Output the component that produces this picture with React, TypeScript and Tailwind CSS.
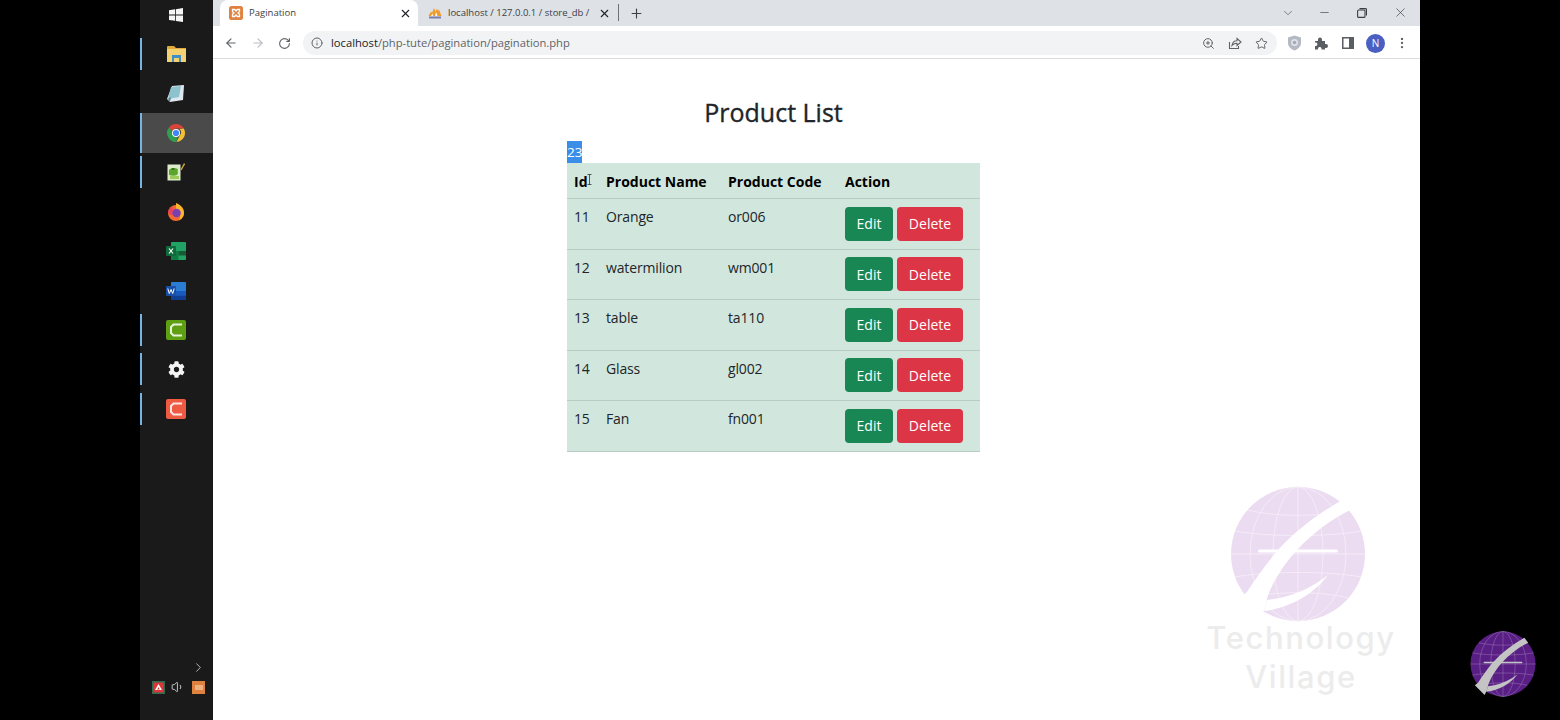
import { ArrowLeft, ArrowRight, ChevronDown, ChevronRight, EllipsisVertical, Info, Minus, Plus, RotateCw, Star, Volume1, X, ZoomIn } from 'lucide-react'
import { FaCog } from 'react-icons/fa'

const products = [
  { id: 11, name: 'Orange', code: 'or006' },
  { id: 12, name: 'watermilion', code: 'wm001' },
  { id: 13, name: 'table', code: 'ta110' },
  { id: 14, name: 'Glass', code: 'gl002' },
  { id: 15, name: 'Fan', code: 'fn001' },
]

function XamppIcon({ size = 14 }: { size?: number }) {
  return (
    <svg width={size} height={size} viewBox="0 0 14 14">
      <rect width="14" height="14" rx="2.5" fill="#e0823f" />
      <path d="M3.5 3.5h2.2L7 5l1.3-1.5h2.2v2.2L9 7l1.5 1.3v2.2H8.3L7 9l-1.3 1.5H3.5V8.3L5 7 3.5 5.7z" fill="none" stroke="#fff" strokeWidth="1.3" />
    </svg>
  )
}

function PmaIcon() {
  return (
    <svg width="14" height="14" viewBox="0 0 14 14">
      <path d="M0.5 10 3 5.5 4 7 6 2 7.5 5.5 9 2.5 10 5 11 3.5 13.5 10z" fill="#ee9b2d" />
      <path d="M3 10 4.5 7.5 5 10zM7 10 8 6 9.5 10z" fill="#fff" />
      <rect x="1" y="10.5" width="12" height="2" fill="#7b7fb0" />
    </svg>
  )
}

function ShareIcon() {
  return (
    <svg width="14" height="14" viewBox="0 0 14 14" fill="none" stroke="#5f6368" strokeWidth="1.1">
      <path d="M1.5 6v6.5h9V10" />
      <path d="M4 9.5C4.5 6.5 6.5 4.8 9 4.8V2.5l4 3.5-4 3.5V7.2C7 7.2 5.3 8 4 9.5z" />
    </svg>
  )
}

function ShieldIcon() {
  return (
    <svg width="15" height="16" viewBox="0 0 15 16">
      <path d="M7.5 0.5 14 2.5V8c0 3.5-3 6-6.5 7.5C4 14 1 11.5 1 8V2.5z" fill="#b5b9c4" />
      <circle cx="7.5" cy="7.5" r="3.5" fill="#dfe2e8" />
      <circle cx="7.5" cy="7.5" r="1.8" fill="#a5a9b4" />
    </svg>
  )
}

function PuzzleIcon() {
  return (
    <svg width="14" height="14" viewBox="0 0 14 14">
      <path d="M1 5h3V3.5a2 2 0 0 1 4 0V5h3v3h1a2 2 0 0 1 0 4h-1v1.5H7.5v-1a1.8 1.8 0 0 0-3.5 0v1H1V10h1a1.8 1.8 0 0 0 0-3.5H1z" fill="#5a5d62" />
    </svg>
  )
}

function SidePanelIcon() {
  return (
    <svg width="12" height="12" viewBox="0 0 12 12">
      <rect x="0.75" y="0.75" width="10.5" height="10.5" fill="none" stroke="#5a5d62" strokeWidth="1.5" />
      <rect x="7" y="1" width="4" height="10" fill="#5a5d62" />
    </svg>
  )
}

function RestoreIcon() {
  return (
    <svg width="10" height="10" viewBox="0 0 10 10" fill="none" stroke="#3c4043" strokeWidth="1.1">
      <rect x="0.6" y="2" width="7.4" height="7.4" rx="1" />
      <path d="M2.5 0.6h6a1 1 0 0 1 1 1v6" />
    </svg>
  )
}

function WindowsIcon() {
  return (
    <svg width="14" height="14" viewBox="0 0 14 14" fill="#f4f4f4">
      <path d="M0 2.2 6 1.3v5.3H0zM6.8 1.2 14 0v6.6H6.8zM0 7.4h6v5.4L0 11.9zM6.8 7.4H14V14L6.8 12.9z" />
    </svg>
  )
}

function FolderIcon() {
  return (
    <svg width="19" height="16" viewBox="0 0 19 16">
      <path d="M0 1a1 1 0 0 1 1-1h6l2 2h10v3H0z" fill="#e0a93a" />
      <rect y="3" width="19" height="13" rx="0.5" fill="#f4d272" />
      <path d="M5 9h9v7h-2v-4H7v4H5z" fill="#3f8fc4" />
    </svg>
  )
}

function NotepadIcon() {
  return (
    <svg width="18" height="17" viewBox="0 0 18 17">
      <path d="M5 1 17 0 16 15 3 17 0 14z" fill="#dfe8ec" />
      <path d="M4 2 14 1 12 12 1 14z" fill="#8cc3cf" />
      <path d="M1 14 3 17 4 12z" fill="#4f7f8e" />
    </svg>
  )
}

function ChromeIcon() {
  return (
    <svg width="18" height="18" viewBox="0 0 18 18">
      <path d="M9 0a9 9 0 0 1 7.8 4.5H9a4.5 4.5 0 0 0-4.2 2.9L2.2 3.2A9 9 0 0 1 9 0z" fill="#dc4437" />
      <path d="M16.8 4.5A9 9 0 0 1 9.5 18l3.4-6.8A4.5 4.5 0 0 0 12.5 5z" fill="#f5c02f" />
      <path d="M2.2 3.2 5.8 10A4 4 0 0 0 11 13l-2 5A9 9 0 0 1 2.2 3.2z" fill="#2f9e4f" />
      <circle cx="9" cy="9" r="4" fill="#fff" />
      <circle cx="9" cy="9" r="3.1" fill="#4285f4" />
    </svg>
  )
}

function NotepadPlusIcon() {
  return (
    <svg width="18" height="18" viewBox="0 0 18 18">
      <rect x="0.5" y="1.5" width="13" height="16" fill="#dcebc8" />
      <path d="M2 7c3-3 6-2 9-1-1 2 1 4-1 6-2 1-5 1-8 0z" fill="#5aa72c" />
      <path d="M3 13h9v3H3z" fill="#9ccb5a" />
      <path d="M4 6c1-1 3-1 4 0-1 1-3 1-4 0z" fill="#28541a" />
      <path d="M14 7 17.5 0.5" stroke="#c9a23a" strokeWidth="1.5" />
    </svg>
  )
}

function FirefoxIcon() {
  return (
    <svg width="18" height="18" viewBox="0 0 18 18">
      <circle cx="9" cy="10" r="8" fill="#f26a2e" />
      <path d="M9 0c3 1 8 4 8 10 0 3-2 6-5 7 2-3 2-8-3-11z" fill="#fbb62c" />
      <circle cx="9.5" cy="10" r="4.3" fill="#7b3fb4" />
      <path d="M1 9c1-3 3-5 5-5-1 2 0 3 1 3-2 1-3 3-1 5-3 0-4-1-5-3z" fill="#ed3f5b" />
    </svg>
  )
}

function ExcelIcon() {
  return (
    <svg width="20" height="18" viewBox="0 0 20 18">
      <rect x="5" y="0" width="15" height="18" rx="1" fill="#21a366" />
      <rect x="5" y="9" width="7.5" height="9" fill="#107c41" />
      <rect x="12.5" y="9" width="7.5" height="4.5" fill="#185c37" />
      <rect x="0" y="4" width="10" height="10" rx="1" fill="#0f6b3c" />
      <path d="M3 6.5 7 11.5M7 6.5 3 11.5" stroke="#fff" strokeWidth="1.2" />
    </svg>
  )
}

function WordIcon() {
  return (
    <svg width="20" height="18" viewBox="0 0 20 18">
      <rect x="5" y="0" width="15" height="18" rx="1" fill="#2b7cd3" />
      <rect x="5" y="9" width="15" height="4.5" fill="#185abd" />
      <rect x="5" y="13.5" width="15" height="4.5" fill="#103f91" />
      <rect x="0" y="4" width="10" height="10" rx="1" fill="#1a4fa8" />
      <path d="M1.8 6.5 3.3 11.5 5 7.5 6.7 11.5 8.2 6.5" fill="none" stroke="#fff" strokeWidth="1" />
    </svg>
  )
}

function CamtasiaIcon({ bg }: { bg: string }) {
  return (
    <svg width="20" height="20" viewBox="0 0 20 20">
      <rect width="20" height="20" rx="2" fill={bg} />
      <path d="M16 4.5H7.5L5 7v6l2.5 2.5H16" fill="none" stroke="#fff" strokeOpacity="0.85" strokeWidth="2" />
    </svg>
  )
}

function AcrobatIcon() {
  return (
    <svg width="13" height="13" viewBox="0 0 13 13">
      <rect width="13" height="13" fill="#2f6b4f" />
      <rect x="1.5" y="1.5" width="10" height="10" fill="#d9383a" />
      <path d="M6.5 3 10 9H3z" fill="#fff" />
      <path d="M6.5 6 7.8 8.5H5.2z" fill="#d9383a" />
    </svg>
  )
}

function Globe({ size, fill, line, band }: { size: number; fill: string; line: string; band: string }) {
  return (
    <svg width={size} height={size} viewBox="0 0 136 136">
      <circle cx="68" cy="68" r="67" fill={fill} />
      <g fill="none" stroke={line} strokeWidth="1">
        <ellipse cx="68" cy="68" rx="48" ry="67" />
        <ellipse cx="68" cy="68" rx="25" ry="67" />
        <path d="M68 1v134M5 45c30 6 96 6 126 0M1 68h134M5 91c30-6 96-6 126 0M18 24c25 7 75 7 100 0M18 112c25-7 75-7 100 0" />
      </g>
      <path d="M112 14C88 28 66 44 48 64 36 78 26 92 17 106L10 112 30 132 35 122 38 109C46 90 56 76 67 64 82 48 100 34 120 24z" fill={band} />
      <path d="M98 89C84 100 68 108 50 112L37 114 34 125C60 122 84 108 98 89z" fill={band} />
      <rect x="28" y="63.5" width="80" height="3" rx="1.5" fill={band} />
    </svg>
  )
}

const dockApps = [
  { icon: <FolderIcon />, open: true },
  { icon: <NotepadIcon />, open: false },
  { icon: <ChromeIcon />, open: true, active: true },
  { icon: <NotepadPlusIcon />, open: true },
  { icon: <FirefoxIcon />, open: false },
  { icon: <ExcelIcon />, open: false },
  { icon: <WordIcon />, open: false },
  { icon: <CamtasiaIcon bg="#5fa012" />, open: true },
  { icon: <FaCog size={17} color="#f4f4f4" />, open: true },
  { icon: <CamtasiaIcon bg="#ee5a42" />, open: true },
]

export default function App() {
  return (
    <div className="relative flex h-[720px] w-[1560px] overflow-hidden bg-black font-['Open_Sans',sans-serif]">
      <div className="w-[140px]" />

      {/* Панель задач */}
      <aside className="flex h-full w-[73px] flex-col bg-[#1a1a1a]">
        <div className="flex h-[30px] items-center justify-center pr-[1px]">
          <WindowsIcon />
        </div>
        <div className="mt-[4.6px] flex flex-col">
          {dockApps.map((app, i) => (
            <div key={i} className={app.active ? 'flex h-[39.4px] items-center bg-[#4a4a4a]' : 'flex h-[39.4px] items-center'}>
              <div className={app.active ? 'h-full w-[2px] bg-[#76b4e4]' : app.open ? 'h-[32px] w-[2px] bg-[#76b4e4]' : 'h-[32px] w-[2px]'} />
              <div className="flex flex-1 items-center justify-center pr-[3px]">{app.icon}</div>
            </div>
          ))}
        </div>
        <div className="mt-auto flex justify-end pr-[7px]">
          <ChevronRight size={15} color="#d8d8d8" strokeWidth={1.3} />
        </div>
        <div className="mt-[5px] mb-[26px] flex items-center pl-[12px]">
          <AcrobatIcon />
          <Volume1 size={14} color="#dcdcdc" strokeWidth={1.5} className="ml-[6px]" />
          <div className="ml-[7px] flex h-[13px] w-[13px] items-center justify-center bg-[#e0823f]">
            <div className="h-[5px] w-[8px] bg-[#f0b080]" />
          </div>
        </div>
      </aside>

      {/* Окно браузера */}
      <main className="relative flex h-full w-[1207px] flex-col bg-white">
        <div className="flex h-[26px] items-end bg-[#dee1e6] pl-[7px] text-[#3c4043]">
          <div className="flex h-[26px] w-[198px] items-center rounded-t-lg bg-white pr-[6px] pl-[9px] text-[9.5px]">
            <XamppIcon />
            <span className="ml-[6px] flex-1">Pagination</span>
            <X size={13} color="#202124" strokeWidth={2} />
          </div>
          <div className="flex h-[26px] w-[198px] items-center pr-[5px] pl-[10px] text-[9.5px]">
            <PmaIcon />
            <span className="ml-[6px] flex-1 whitespace-nowrap">localhost / 127.0.0.1 / store_db /</span>
            <X size={13} color="#202124" strokeWidth={2} className="shrink-0" />
          </div>
          <div className="mb-[5px] ml-[2px] h-[17px] w-px bg-[#6d7074]" />
          <Plus size={15} color="#3c4043" strokeWidth={1.8} className="mb-[5px] ml-[10px]" />
          <div className="mb-[6px] ml-auto flex items-center">
            <ChevronDown size={14} color="#5f6368" strokeWidth={1.3} />
            <Minus size={13} color="#3c4043" strokeWidth={1.2} className="ml-[23px]" />
            <div className="ml-[26px]"><RestoreIcon /></div>
            <X size={15} color="#3c4043" strokeWidth={1.1} className="mr-[12px] ml-[26px]" />
          </div>
        </div>

        <div className="flex h-[33px] items-center border-b border-[#dadce0] px-[11px] pt-[2px]">
          <ArrowLeft size={14} color="#5f6368" strokeWidth={2} />
          <ArrowRight size={14} color="#b9bcc0" strokeWidth={2} className="ml-[13px]" />
          <RotateCw size={13} color="#5f6368" strokeWidth={2} className="ml-[13px]" />
          <div className="ml-[12px] flex h-[24px] w-[974px] items-center rounded-full bg-[#f1f3f4] pr-[9px] pl-[8px] text-[11.2px]">
            <Info size={12} color="#5f6368" strokeWidth={2} />
            <span className="ml-[8px] flex-1 text-[#202124]">
              localhost<span className="text-[#5f6368]">/php-tute/pagination/pagination.php</span>
            </span>
            <ZoomIn size={13} color="#5f6368" strokeWidth={1.8} />
            <div className="ml-[13px]"><ShareIcon /></div>
            <Star size={13} color="#5f6368" strokeWidth={1.8} className="ml-[13px]" />
          </div>
          <div className="ml-[10px]"><ShieldIcon /></div>
          <div className="ml-[12px]"><PuzzleIcon /></div>
          <div className="ml-[14px]"><SidePanelIcon /></div>
          <div className="ml-[12px] flex h-[19px] w-[19px] items-center justify-center rounded-full bg-[#4a5fc1] text-[10px] text-white">N</div>
          <EllipsisVertical size={14} color="#5f6368" strokeWidth={2} className="ml-[10px]" />
        </div>

        <div className="ml-[354px] w-[413px] text-[#212529]">
          <h1 className="mt-[31px] text-center text-[25px] leading-[44px] font-medium [-webkit-text-stroke:0.35px_#212529]">Product List</h1>
          <div className="mt-[7px] h-[22px] text-[13.5px] leading-[22px]">
            <span className="inline-block bg-[#3b8ee8] text-white">23</span>
          </div>
          <table className="w-[413px] table-fixed border-collapse bg-[#d1e7dd] text-[14px] text-[#212529]">
            <thead>
              <tr className="h-[35.5px] border-b border-[#b9ccc3] text-left text-black">
                <th className="relative w-[32px] pt-[1px] pl-[7px] font-bold">
                  Id
                  <svg width="5" height="11" viewBox="0 0 5 11" className="absolute top-[11px] left-[20px]" fill="none" stroke="#333" strokeWidth="0.8">
                    <path d="M0.5 0.5h4M2.5 0.5v10M0.5 10.5h4" />
                  </svg>
                </th>
                <th className="w-[122px] pt-[1px] pl-[7px] font-bold">Product Name</th>
                <th className="w-[116px] pt-[1px] pl-[7px] font-bold">Product Code</th>
                <th className="pt-[1px] pl-[8px] font-bold">Action</th>
              </tr>
            </thead>
            <tbody>
              {products.map((p) => (
                <tr key={p.id} className="h-[50.5px] border-b border-[#b9ccc3]">
                  <td className="pt-[7px] pl-[7px] align-top leading-[22px] tracking-[-0.15px]">{p.id}</td>
                  <td className="pt-[7px] pl-[7px] align-top leading-[22px] tracking-[-0.15px]">{p.name}</td>
                  <td className="pt-[7px] pl-[7px] align-top leading-[22px] tracking-[-0.15px]">{p.code}</td>
                  <td className="pl-[8px] align-middle">
                    <div className="flex gap-[4px]">
                      <button className="h-[34px] w-[48px] rounded bg-[#198754] text-white">Edit</button>
                      <button className="h-[34px] w-[66px] rounded bg-[#dc3545] text-white">Delete</button>
                    </div>
                  </td>
                </tr>
              ))}
            </tbody>
          </table>
        </div>

        {/* Водяной знак */}
        <div className="pointer-events-none absolute top-[486px] left-[985px] flex w-[200px] flex-col items-center">
          <Globe size={136} fill="#ebdcf1" line="#f5ecf8" band="#ffffff" />
          <div className="mt-[-4px] ml-[6px] text-center font-['Inter',sans-serif] text-[31px] leading-[39px] font-medium tracking-[1.6px] text-[#ececec]">
            Technology
            <br />
            Village
          </div>
        </div>
      </main>

      <div className="absolute top-[631px] left-[1470px]">
        <Globe size={66} fill="#5a1f84" line="#9a78b8" band="#c4c4c4" />
      </div>
    </div>
  )
}
